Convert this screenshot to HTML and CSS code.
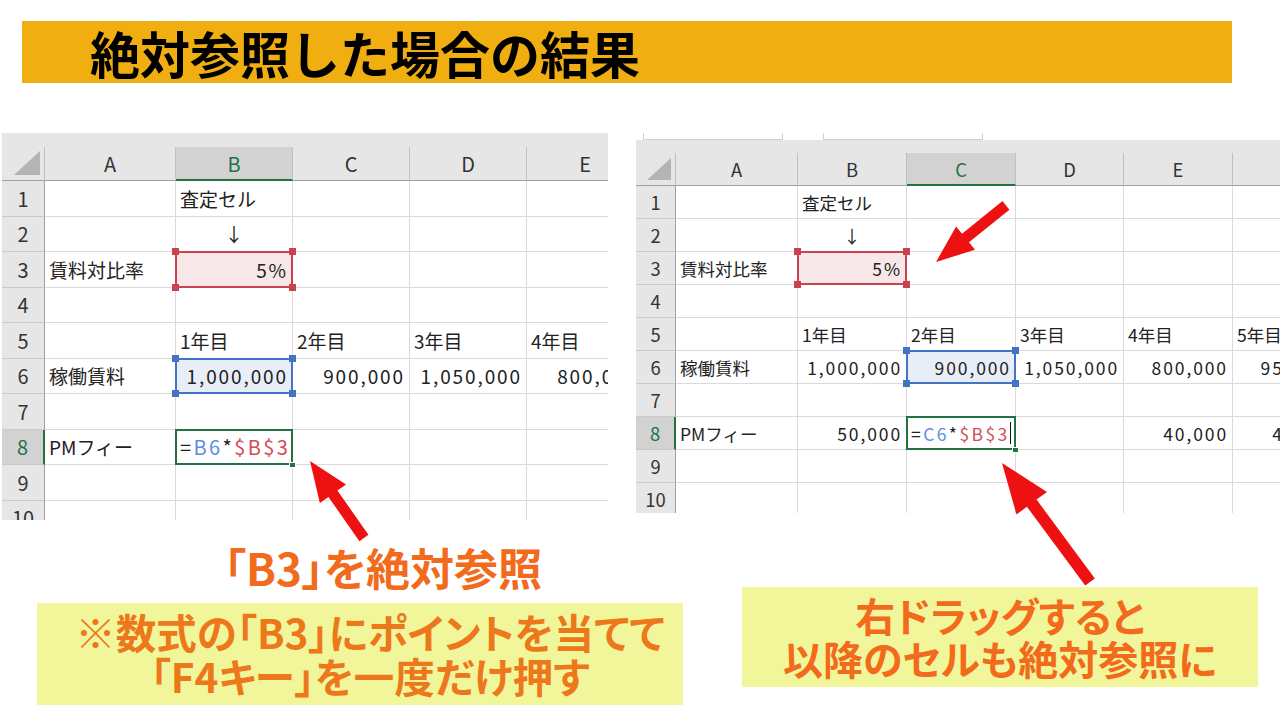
FILE: index.html
```html
<!DOCTYPE html>
<html lang="ja">
<head>
    <meta charset="UTF-8">
    <title>絶対参照した場合の結果</title>
    <link rel="stylesheet" href="styles.css">
</head>
<body>
    <div class="slide">
        <h1 class="title">絶対参照した場合の結果</h1>

        <div class="sheets">
            <!-- 左：B8に数式を入力 -->
            <div class="sheet sheet-l">
                <div class="grid">
                    <div class="hd corner"></div><div class="hd">A</div><div class="hd sel">B</div><div class="hd">C</div><div class="hd">D</div><div class="hd">E</div>

                    <div class="rn">1</div><div class="c"></div><div class="c">査定セル</div><div class="c"></div><div class="c"></div><div class="c"></div>
                    <div class="rn">2</div><div class="c"></div><div class="c mid">↓</div><div class="c"></div><div class="c"></div><div class="c"></div>
                    <div class="rn">3</div><div class="c">賃料対比率</div><div class="c num ref-red">5%<i class="h tl"></i><i class="h tr"></i><i class="h bl"></i><i class="h br"></i></div><div class="c"></div><div class="c"></div><div class="c"></div>
                    <div class="rn">4</div><div class="c"></div><div class="c"></div><div class="c"></div><div class="c"></div><div class="c"></div>
                    <div class="rn">5</div><div class="c"></div><div class="c">1年目</div><div class="c">2年目</div><div class="c">3年目</div><div class="c">4年目</div>
                    <div class="rn">6</div><div class="c">稼働賃料</div><div class="c num ref-blue">1,000,000<i class="h tl"></i><i class="h tr"></i><i class="h bl"></i><i class="h br"></i></div><div class="c num">900,000</div><div class="c num">1,050,000</div><div class="c num">800,000</div>
                    <div class="rn">7</div><div class="c"></div><div class="c"></div><div class="c"></div><div class="c"></div><div class="c"></div>
                    <div class="rn sel">8</div><div class="c">PMフィー</div><div class="c fx active">=<span class="f-blue">B6</span>*<span class="f-red">$B$3</span><span class="caret"></span><i class="fill"></i></div><div class="c"></div><div class="c"></div><div class="c"></div>
                    <div class="rn">9</div><div class="c"></div><div class="c"></div><div class="c"></div><div class="c"></div><div class="c"></div>
                    <div class="rn">10</div><div class="c"></div><div class="c"></div><div class="c"></div><div class="c"></div><div class="c"></div>
                </div>
            </div>

            <!-- 右：右へドラッグした後 -->
            <div class="sheet sheet-r">
                <div class="fbar"><span class="fbox fbox-1"></span><span class="fbox fbox-2"></span></div>
                <div class="grid">
                    <div class="hd corner"></div><div class="hd">A</div><div class="hd">B</div><div class="hd sel">C</div><div class="hd">D</div><div class="hd">E</div><div class="hd"></div>

                    <div class="rn">1</div><div class="c"></div><div class="c">査定セル</div><div class="c"></div><div class="c"></div><div class="c"></div><div class="c"></div>
                    <div class="rn">2</div><div class="c"></div><div class="c mid">↓</div><div class="c"></div><div class="c"></div><div class="c"></div><div class="c"></div>
                    <div class="rn">3</div><div class="c">賃料対比率</div><div class="c num ref-red">5%<i class="h tl"></i><i class="h tr"></i><i class="h bl"></i><i class="h br"></i></div><div class="c"></div><div class="c"></div><div class="c"></div><div class="c"></div>
                    <div class="rn">4</div><div class="c"></div><div class="c"></div><div class="c"></div><div class="c"></div><div class="c"></div><div class="c"></div>
                    <div class="rn">5</div><div class="c"></div><div class="c">1年目</div><div class="c">2年目</div><div class="c">3年目</div><div class="c">4年目</div><div class="c">5年目</div>
                    <div class="rn">6</div><div class="c">稼働賃料</div><div class="c num">1,000,000</div><div class="c num ref-blue">900,000<i class="h tl"></i><i class="h tr"></i><i class="h bl"></i><i class="h br"></i></div><div class="c num">1,050,000</div><div class="c num">800,000</div><div class="c num">950,000</div>
                    <div class="rn">7</div><div class="c"></div><div class="c"></div><div class="c"></div><div class="c"></div><div class="c"></div><div class="c"></div>
                    <div class="rn sel">8</div><div class="c">PMフィー</div><div class="c num">50,000</div><div class="c fx active">=<span class="f-blue">C6</span>*<span class="f-red">$B$3</span><span class="caret"></span><i class="fill"></i></div><div class="c"></div><div class="c num">40,000</div><div class="c num">45,000</div>
                    <div class="rn">9</div><div class="c"></div><div class="c"></div><div class="c"></div><div class="c"></div><div class="c"></div><div class="c"></div>
                    <div class="rn">10</div><div class="c"></div><div class="c"></div><div class="c"></div><div class="c"></div><div class="c"></div><div class="c"></div>
                </div>
            </div>
        </div>

        <div class="notes">
            <div class="note-l">
                <p class="caption">「B3」を絶対参照</p>
                <div class="memo memo-l">
                    <span>※数式の「B3」にポイントを当てて</span>
                    <span>「F4キー」を一度だけ押す</span>
                </div>
            </div>
            <div class="memo memo-r">
                <span>右ドラッグすると</span>
                <span>以降のセルも絶対参照に</span>
            </div>
        </div>

        <!-- 赤い矢印 -->
        <svg class="arrows" width="1280" height="720" viewBox="0 0 1280 720">
            <polygon transform="translate(310 461) rotate(55)" points="0,0 40,-16 40,-5.5 94,-5.5 94,5.5 40,5.5 40,16" />
            <polygon transform="translate(936 262) rotate(-39)" points="0,0 38,-15 38,-5.5 90,-5.5 90,5.5 38,5.5 38,15" />
            <polygon transform="translate(1002 463) rotate(53.5)" points="0,0 50,-19 50,-6 148,-6 148,6 50,6 50,19" />
        </svg>
    </div>
</body>
</html>
```

FILE: styles.css
```css
* {
    box-sizing: border-box;
}
body {
    margin: 0;
    font-family: "Noto Sans CJK JP", "Noto Sans", sans-serif;
    color: #222;
}
.slide {
    position: relative;
    width: 1280px;
    height: 720px;
    overflow: hidden;
    background-color: white;
}
.title {
    margin: 21px 48px 0 22px;
    height: 62px;
    padding-left: 68px;
    background-color: #f0ae11;
    color: #000;
    font-size: 50px;
    font-weight: 700;
    line-height: 62px;
}

/* spreadsheets */
.sheets {
    display: flex;
    align-items: flex-start;
    height: 387px;
    margin-top: 50px;
}
.sheet {
    overflow: hidden;
    background-color: #e6e6e6;
}
.sheet-l {
    width: 606px;
    height: 387px;
    margin-left: 2px;
    padding-top: 14px;
    font-size: 19px;
}
.sheet-r {
    width: 644px;
    height: 380px;
    margin-left: 28px;
    font-size: 17.5px;
}
.fbar {
    display: flex;
    height: 20px;
    background-color: white;
    border-bottom: 13px solid #e6e6e6;
}
.fbox {
    height: 7px;
    border: 1px solid #d0d0d0;
    border-top: none;
}
.fbox-1 {
    width: 140px;
    margin-left: 7px;
}
.fbox-2 {
    width: 160px;
    margin-left: 40px;
}
.grid {
    display: grid;
}
.sheet-l .grid {
    grid-template-columns: 43px 131px 117px 117px 117px 117px;
    grid-template-rows: 34px repeat(10, 35.5px);
}
.sheet-r .grid {
    grid-template-columns: 40px 122px 109px 109px 108px 109px 109px;
    grid-template-rows: 33px repeat(10, 33px);
}
.hd {
    display: flex;
    align-items: center;
    justify-content: center;
    background-color: #e6e6e6;
    border-right: 1px solid #c0c0c0;
    border-bottom: 1px solid #9f9f9f;
    color: #333;
    font-size: 1.05em;
}
.hd.sel {
    background-color: #d2d2d2;
    border-bottom: 2px solid #217346;
    color: #217346;
}
.corner {
    position: relative;
}
.corner::after {
    content: "";
    position: absolute;
    right: 4px;
    bottom: 5px;
    width: 26px;
    height: 24px;
    background-color: #b4b4b4;
    clip-path: polygon(100% 0, 100% 100%, 0 100%);
}
.sheet-r .corner::after {
    width: 24px;
    height: 22px;
}
.rn {
    display: flex;
    align-items: center;
    justify-content: center;
    background-color: #e6e6e6;
    border-right: 1px solid #9f9f9f;
    border-bottom: 1px solid #cacaca;
    color: #333;
    font-size: 1.05em;
}
.rn.sel {
    background-color: #d2d2d2;
    border-right: 2px solid #217346;
    color: #217346;
}
.c {
    position: relative;
    display: flex;
    align-items: center;
    padding: 0 4px;
    background-color: white;
    border-right: 1px solid #dadada;
    border-bottom: 1px solid #dadada;
    white-space: nowrap;
}
.c.mid {
    justify-content: center;
}
.num {
    justify-content: flex-end;
    letter-spacing: 1.9px;
}
.fx {
    letter-spacing: 2.4px;
}
.sheet-l .fx {
    font-size: 20px;
}

/* reference / selection boxes */
.ref-red, .ref-blue, .active {
    z-index: 1;
}
.ref-red::before, .ref-blue::before, .active::before {
    content: "";
    position: absolute;
    top: -1px;
    left: -1px;
    right: -1px;
    bottom: -1px;
    border: 2px solid;
}
.ref-red {
    background-color: #f8e7e8;
}
.ref-red::before {
    border-color: #c9434e;
}
.ref-blue {
    background-color: #e8eef8;
}
.ref-blue::before {
    border-color: #4472c4;
}
.active::before {
    border-color: #217346;
}
.h {
    position: absolute;
    width: 7px;
    height: 7px;
}
.ref-red .h {
    background-color: #c9434e;
}
.ref-blue .h {
    background-color: #4472c4;
}
.tl { top: -4px; left: -4px; }
.tr { top: -4px; right: -4px; }
.bl { bottom: -4px; left: -4px; }
.br { bottom: -4px; right: -4px; }
.fill {
    position: absolute;
    right: -4px;
    bottom: -4px;
    width: 7px;
    height: 6px;
    background-color: #217346;
    border: 1px solid white;
}
.f-blue {
    color: #5b8ee6;
}
.f-red {
    color: #d44c5a;
}
.caret {
    display: inline-block;
    width: 1px;
    height: 22px;
    background-color: #111;
}

/* notes under the sheets */
.notes {
    display: flex;
    align-items: flex-start;
}
.note-l {
    width: 646px;
    margin-left: 37px;
}
.caption {
    margin: 22px 0 0;
    padding-left: 46px;
    text-align: center;
    color: #f26a1b;
    font-size: 44px;
    font-weight: 700;
    line-height: 50px;
    font-feature-settings: "palt";
}
.memo {
    display: flex;
    flex-direction: column;
    justify-content: center;
    align-items: center;
    background-color: #f2f69a;
    font-weight: 700;
    font-feature-settings: "palt";
    white-space: nowrap;
}
.memo-l {
    height: 102px;
    margin-top: 11px;
    padding-left: 20px;
    color: #ed771b;
    font-size: 40.5px;
    line-height: 44px;
}
.memo-r {
    width: 516px;
    height: 100px;
    margin: 67px 0 0 59px;
    color: #f26a1b;
    font-size: 40px;
    line-height: 43px;
}
.arrows {
    position: absolute;
    top: 0;
    left: 0;
    pointer-events: none;
}
.arrows polygon {
    fill: #ee1111;
}
```
